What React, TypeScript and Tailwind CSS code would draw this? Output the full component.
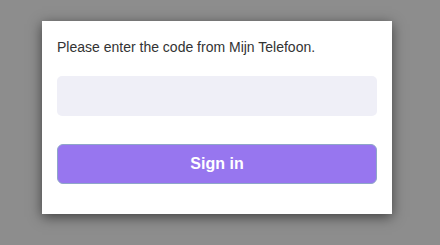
export default function App() {
  return (
    <div className="min-h-[245px] w-[440px] bg-[#8d8d8d] pl-[42px] pt-[21px] font-['Liberation_Sans',Arial,sans-serif]">
      <div className="flex w-[350px] flex-col bg-white px-[15px] pb-[30px] pt-[16px] shadow-[0_3px_12px_rgba(0,0,0,0.55)]">
        <p className="text-[14px] leading-[20px] text-[#333333]">
          Please enter the code from Mijn Telefoon.
        </p>
        <input
          type="text"
          className="mt-[19px] h-[40px] w-full rounded-[5px] bg-[#efeff7] px-3 text-[14px] outline-none"
        />
        <button
          type="button"
          className="mt-[28px] h-[40px] w-full rounded-[6px] border border-[#8fa6c9] bg-[#9776ef] text-[16px] font-bold text-white"
        >
          Sign in
        </button>
      </div>
    </div>
  );
}
